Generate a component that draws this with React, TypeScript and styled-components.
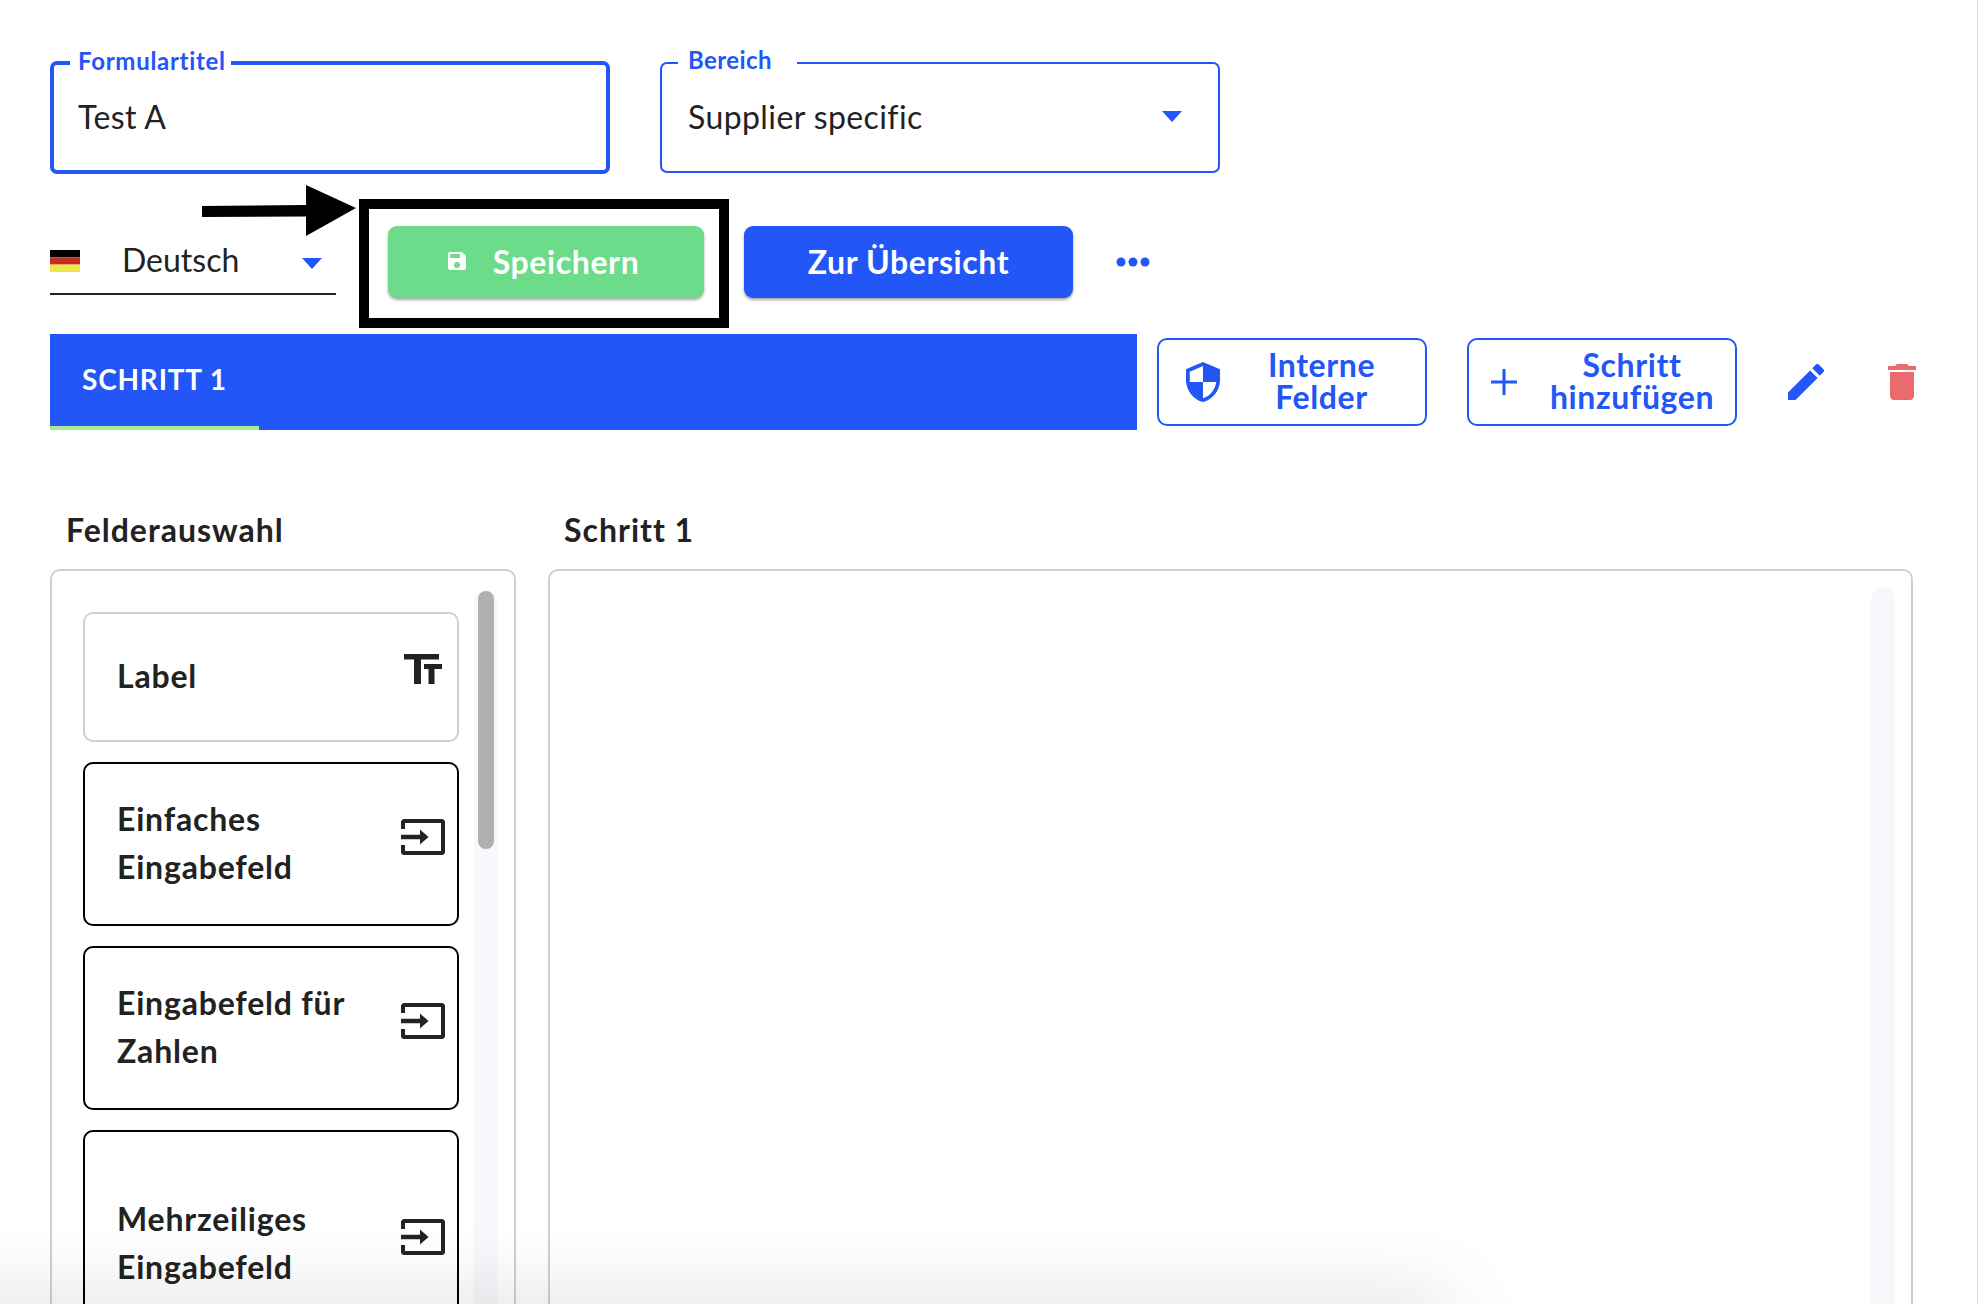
import React from "react";
import styled, { createGlobalStyle } from "styled-components";

const BLUE = "#2356f6";
const INK = "#222222";

const Global = createGlobalStyle`
  html, body { margin: 0; padding: 0; background: #fff; }
  body { font-family: "Lato", "Open Sans", sans-serif; color: ${INK}; }
  * { box-sizing: border-box; }
`;

const Page = styled.div`
  position: relative;
  width: 1978px;
  height: 1304px;
  overflow: hidden;
  padding: 61px 0 0 50px;
  background: #fff;
  border-right: 1px solid #d8d8d8;
`;

const FieldRow = styled.div`
  display: flex;
  align-items: center;
  gap: 50px;
`;

const Field = styled.div<{ $focused?: boolean }>`
  position: relative;
  width: 560px;
  height: ${(p) => (p.$focused ? 113 : 111)}px;
  border: ${(p) => (p.$focused ? 4 : 2)}px solid ${BLUE};
  border-radius: 7px;
  display: flex;
  align-items: center;
  justify-content: space-between;
  padding: 0 36px 2px ${(p) => (p.$focused ? 24 : 26)}px;
`;

const FieldLabel = styled.span<{ $wide?: boolean }>`
  position: absolute;
  top: -17px;
  left: 16px;
  padding: 0 ${(p) => (p.$wide ? 25 : 5)}px 0 ${(p) => (p.$wide ? 10 : 8)}px;
  background: #fff;
  color: ${BLUE};
  font-size: 24px;
  line-height: 26px;
  font-weight: 700;
  letter-spacing: ${(p) => (p.$wide ? 0.4 : 0.7)}px;
`;

const FieldValue = styled.span`
  font-size: 32px;
  line-height: 40px;
  letter-spacing: 0.4px;
  color: ${INK};
`;

const Caret = styled.span`
  width: 0;
  height: 0;
  border-left: 10px solid transparent;
  border-right: 10px solid transparent;
  border-top: 11px solid ${BLUE};
`;

const ActionRow = styled.div`
  display: flex;
  align-items: flex-start;
  margin-top: 52px;
  height: 72px;
`;

const LangSelect = styled.div`
  width: 286px;
  height: 69px;
  border-bottom: 2px solid ${INK};
  display: flex;
  align-items: flex-start;
`;

const Flag = styled.svg`
  width: 30px;
  height: 22px;
  margin-top: 24px;
  flex: none;
`;

const LangName = styled.span`
  margin: 14px 0 0 42px;
  font-size: 32px;
  line-height: 40px;
  width: 180px;
`;

const LangCaret = styled(Caret)`
  margin-top: 32px;
`;

const SolidButton = styled.button<{ $bg: string; $w: number; $ml: number; $inset?: number }>`
  width: ${(p) => p.$w}px;
  height: 72px;
  margin-left: ${(p) => p.$ml}px;
  padding: 0 ${(p) => p.$inset ?? 0}px 2px 0;
  border: 0;
  border-radius: 9px;
  background: ${(p) => p.$bg};
  color: #fff;
  font-family: inherit;
  font-size: 32px;
  letter-spacing: 0.6px;
  font-weight: 700;
  display: flex;
  align-items: center;
  justify-content: center;
  gap: 24px;
  box-shadow: 0 2px 3px rgba(0, 0, 0, 0.35);
`;

const MoreDots = styled.svg`
  width: 34px;
  height: 10px;
  margin: 31px 0 0 43px;
  flex: none;
`;

const StepRow = styled.div`
  display: flex;
  align-items: center;
  margin-top: 36px;
  height: 96px;
`;

const StepBar = styled.div`
  width: 1087px;
  height: 96px;
  background: ${BLUE};
  display: flex;
  flex: none;
`;

const StepTab = styled.div`
  width: 209px;
  height: 96px;
  padding: 25px 0 0 32px;
  border-bottom: 4px solid #a6ea98;
  color: #fff;
  font-size: 28px;
  letter-spacing: 0.8px;
  line-height: 40px;
  font-weight: 700;
  white-space: nowrap;
`;

const OutlineButton = styled.button<{ $ml: number; $pad: number }>`
  width: 270px;
  height: 88px;
  margin-left: ${(p) => p.$ml}px;
  border: 2px solid ${BLUE};
  border-radius: 10px;
  background: #fff;
  color: ${BLUE};
  font-family: inherit;
  font-size: 32px;
  letter-spacing: 0.6px;
  line-height: 32px;
  font-weight: 700;
  padding: 0 20px 2px ${(p) => p.$pad}px;
  display: flex;
  align-items: center;
`;

const OutlineIcon = styled.svg`
  flex: none;
  margin-top: 2px;
`;

const OutlineText = styled.span<{ $inset: number }>`
  flex: 1;
  text-align: center;
  padding-left: ${(p) => p.$inset}px;
`;

const IconSlot = styled.svg<{ $ml: number; $w: number; $h: number }>`
  width: ${(p) => p.$w}px;
  height: ${(p) => p.$h}px;
  margin-left: ${(p) => p.$ml}px;
  flex: none;
`;

const Columns = styled.div`
  display: flex;
  gap: 32px;
  margin-top: 80px;
`;

const Column = styled.section<{ $w: number }>`
  width: ${(p) => p.$w}px;
  flex: none;
`;

const ColumnTitle = styled.h2`
  margin: 0 0 19px 16px;
  font-size: 32px;
  letter-spacing: 1px;
  line-height: 40px;
  font-weight: 700;
  color: ${INK};
`;

const Panel = styled.div`
  position: relative;
  height: 900px;
  border: 2px solid #d0d0d0;
  border-radius: 10px;
  background: #fff;
`;

const CardList = styled.div`
  display: flex;
  flex-direction: column;
  gap: 20px;
  padding: 41px 0 0 31px;
  width: 407px;
`;

const Card = styled.div<{ $h: number; $muted?: boolean }>`
  height: ${(p) => p.$h}px;
  border: 2px solid ${(p) => (p.$muted ? "#d0d0d0" : "#000")};
  border-radius: 10px;
  display: flex;
  align-items: center;
  justify-content: space-between;
  padding: 0 12px 0 32px;
`;

const CardName = styled.span`
  margin-top: -2px;
  font-size: 32px;
  letter-spacing: 0.8px;
  line-height: 48px;
  font-weight: 700;
  color: ${INK};
`;

const CardIcon = styled.svg<{ $up: number; $mr?: number }>`
  flex: none;
  margin-top: -${(p) => p.$up}px;
  margin-right: ${(p) => p.$mr ?? 0}px;
`;

const Track = styled.div<{ $top: number }>`
  position: absolute;
  top: ${(p) => p.$top}px;
  right: 16px;
  width: 24px;
  bottom: 0;
  border-radius: 12px;
  background: #f7f7fc;
`;

const Thumb = styled.div`
  position: absolute;
  top: 0;
  left: 4px;
  width: 16px;
  height: 258px;
  border-radius: 8px;
  background: #b0b0b0;
`;

const BottomShade = styled.div`
  position: absolute;
  left: -200px;
  bottom: -40px;
  width: 1650px;
  height: 40px;
  pointer-events: none;
  box-shadow: 0 0 80px 0 rgba(0, 0, 0, 0.18);
`;

const Highlight = styled.div`
  position: absolute;
  left: 359px;
  top: 199px;
  width: 370px;
  height: 129px;
  border: 10px solid #000;
  pointer-events: none;
`;

const PointerArrow = styled.svg`
  position: absolute;
  left: 200px;
  top: 183px;
  pointer-events: none;
`;

const InputIcon = () => (
  <CardIcon $up={14} width="44" height="36" viewBox="0 0 44 36" fill="none">
    <path d="M2 10V3.500A1.500 1.500 0 0 1 3.500 2h37A1.500 1.500 0 0 1 42 3.500v29a1.500 1.500 0 0 1-1.500 1.500h-37A1.500 1.500 0 0 1 2 32.500V26" stroke="#222" strokeWidth="4" />
    <path d="M0 18h20" stroke="#222" strokeWidth="4.500" />
    <path d="M19 10.500 27.500 18 19 25.500Z" fill="#222" />
  </CardIcon>
);

const TextIcon = () => (
  <CardIcon $up={17} $mr={3} width="38" height="30" viewBox="0 0 38 30">
    <path fill="#222" d="M0 0h35v5.500H17V30H10V5.500H0z" />
    <path fill="#222" d="M20 10h18v5h-7.500V30H24.500V15H20z" />
  </CardIcon>
);

export default function App() {
  return (
    <>
      <Global />
      <Page>
        <FieldRow>
          <Field $focused>
            <FieldLabel>Formulartitel</FieldLabel>
            <FieldValue>Test A</FieldValue>
          </Field>
          <Field>
            <FieldLabel $wide>Bereich</FieldLabel>
            <FieldValue>Supplier specific</FieldValue>
            <Caret />
          </Field>
        </FieldRow>

        <ActionRow>
          <LangSelect>
            <Flag viewBox="0 0 30 22">
              <rect width="30" height="7.300" y="0" fill="#000" />
              <rect width="30" height="7.300" y="7.300" fill="#c62d1f" />
              <rect width="30" height="7.400" y="14.600" fill="#efe64d" />
            </Flag>
            <LangName>Deutsch</LangName>
            <LangCaret />
          </LangSelect>
          <SolidButton $bg="#6cdb8a" $w={316} $ml={52} $inset={8}>
            <svg width="24" height="24" viewBox="0 0 24 24" fill="#fff">
              <path d="M17 3H5a2 2 0 0 0-2 2v14a2 2 0 0 0 2 2h14a2 2 0 0 0 2-2V7l-4-4zm-5 16a3 3 0 1 1 0-6 3 3 0 0 1 0 6zm3-10H5V5h10v4z" />
            </svg>
            Speichern
          </SolidButton>
          <SolidButton $bg={BLUE} $w={329} $ml={40}>Zur Übersicht</SolidButton>
          <MoreDots viewBox="0 0 34 10" fill={BLUE}>
            <circle cx="5" cy="5" r="4.500" />
            <circle cx="17" cy="5" r="4.500" />
            <circle cx="29" cy="5" r="4.500" />
          </MoreDots>
        </ActionRow>

        <StepRow>
          <StepBar>
            <StepTab>SCHRITT 1</StepTab>
          </StepBar>
          <OutlineButton $ml={20} $pad={27}>
            <OutlineIcon width="34" height="40" viewBox="3 1 18 22" preserveAspectRatio="none" fill={BLUE}>
              <path d="M12 1 3 5v6c0 5.550 3.840 10.740 9 12 5.160-1.260 9-6.450 9-12V5l-9-4zm0 10.990h7c-.53 4.120-3.280 7.790-7 8.940V12H5V6.300l7-3.110v8.800z" />
            </OutlineIcon>
            <OutlineText $inset={18}>Interne<br />Felder</OutlineText>
          </OutlineButton>
          <OutlineButton $ml={40} $pad={22}>
            <OutlineIcon width="26" height="26" viewBox="0 0 26 26" stroke={BLUE} strokeWidth="3">
              <path d="M13 0v26M0 13h26" />
            </OutlineIcon>
            <OutlineText $inset={32}>Schritt<br />hinzufügen</OutlineText>
          </OutlineButton>
          <IconSlot $ml={51} $w={36} $h={36} viewBox="3 3 18 18" fill={BLUE}>
            <path d="M3 17.250V21h3.750L17.810 9.940l-3.750-3.750L3 17.250zM20.710 7.040a1 1 0 0 0 0-1.410l-2.340-2.340a1 1 0 0 0-1.410 0l-1.830 1.830 3.750 3.750 1.830-1.830z" />
          </IconSlot>
          <IconSlot $ml={64} $w={28} $h={36} viewBox="5 3 14 18" fill="#ea6a6e">
            <path d="M6 19c0 1.100.9 2 2 2h8c1.100 0 2-.9 2-2V7H6v12zM19 4h-3.500l-1-1h-5l-1 1H5v2h14V4z" />
          </IconSlot>
        </StepRow>

        <Columns>
          <Column $w={466}>
            <ColumnTitle>Felderauswahl</ColumnTitle>
            <Panel>
              <CardList>
                <Card $h={130} $muted>
                  <CardName>Label</CardName>
                  <TextIcon />
                </Card>
                <Card $h={164}>
                  <CardName>Einfaches<br />Eingabefeld</CardName>
                  <InputIcon />
                </Card>
                <Card $h={164}>
                  <CardName>Eingabefeld für<br />Zahlen</CardName>
                  <InputIcon />
                </Card>
                <Card $h={228}>
                  <CardName>Mehrzeiliges<br />Eingabefeld</CardName>
                  <InputIcon />
                </Card>
              </CardList>
              <Track $top={20}>
                <Thumb />
              </Track>
            </Panel>
          </Column>
          <Column $w={1365}>
            <ColumnTitle>Schritt 1</ColumnTitle>
            <Panel>
              <Track $top={16} />
            </Panel>
          </Column>
        </Columns>

        <BottomShade />
        <Highlight />
        <PointerArrow width="158" height="54" viewBox="0 0 158 54" fill="#000">
          <path d="M2 23 106 22V2l50 23-50 28V33.500L2 34z" />
        </PointerArrow>
      </Page>
    </>
  );
}
